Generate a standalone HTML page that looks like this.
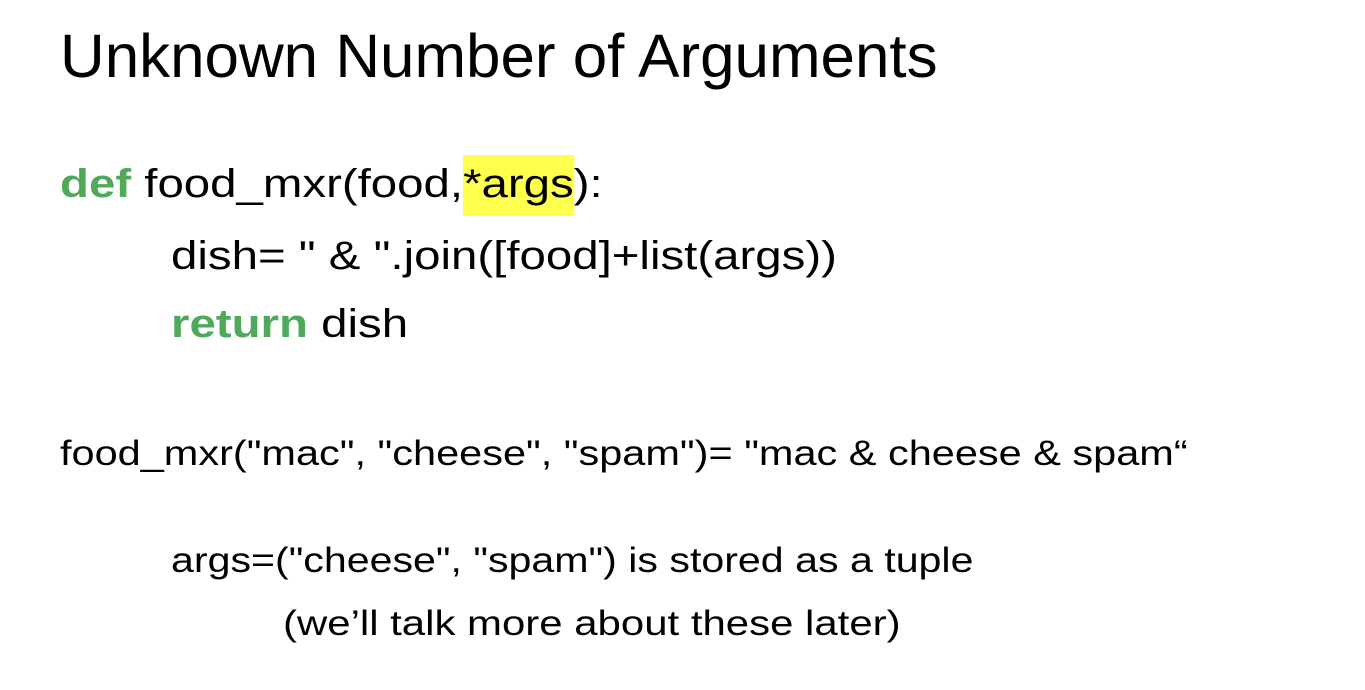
<!DOCTYPE html>
<html><head><meta charset="utf-8"><style>
html,body{margin:0;padding:0;background:#fff;width:1365px;height:690px;overflow:hidden;position:relative}
div{position:absolute;font-family:"Liberation Sans",sans-serif;color:#000;line-height:1.117;white-space:nowrap;transform-origin:0 0}
.s{transform:scaleX(1.185)}
.g{color:#4ea95a;font-weight:bold}
.h{background:#ffff4d;padding:7px 0 10px}
</style></head><body>
<div style="left:60px;top:22px;font-size:61px;transform:scaleX(1.015)">Unknown Number of Arguments</div>
<div class="s" style="left:60px;top:162px;font-size:40px"><span class="g">def</span> food_mxr(food,<span class="h">*args</span>):</div>
<div class="s" style="left:171px;top:234px;font-size:40px">dish= " &amp; ".join([food]+list(args))</div>
<div class="s" style="left:171px;top:302px;font-size:40px"><span class="g">return</span> dish</div>
<div class="s" style="left:60px;top:434px;font-size:35px">food_mxr("mac", "cheese", "spam")= "mac &amp; cheese &amp; spam“</div>
<div class="s" style="left:171px;top:541px;font-size:35px;transform:scaleX(1.175)">args=("cheese", "spam") is stored as a tuple</div>
<div class="s" style="left:283px;top:604px;font-size:35px;transform:scaleX(1.198)">(we’ll talk more about these later)</div>
</body></html>
